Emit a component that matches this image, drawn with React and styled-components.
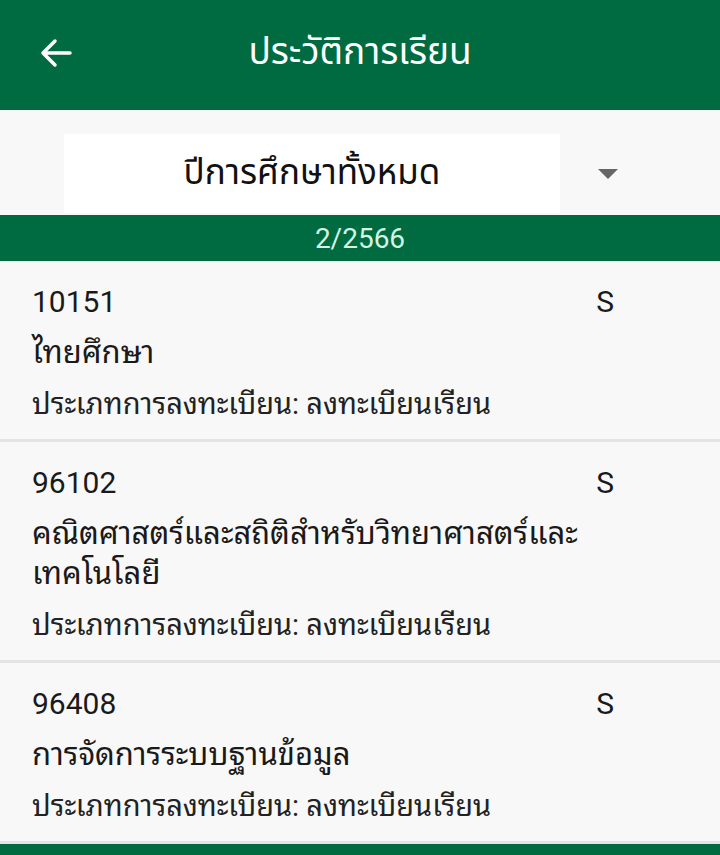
import React from "react";
import styled, { createGlobalStyle } from "styled-components";

const Global = createGlobalStyle`
  html, body { margin: 0; padding: 0; background: #f8f8f8; }
  body { font-family: Roboto, "Noto Sans Thai Looped", "Noto Sans Thai", "Noto Sans", sans-serif; }
`;

const Page = styled.div`
  width: 720px;
  height: 855px;
  overflow: hidden;
  background: #f8f8f8;
  display: flex;
  flex-direction: column;
`;

const Header = styled.header`
  height: 110px;
  background: #006b40;
  display: flex;
  align-items: center;
  position: relative;
  flex-shrink: 0;
`;

const BackButton = styled.button`
  width: 40px;
  height: 40px;
  margin-left: 36px;
  margin-top: -4px;
  padding: 0;
  border: 0;
  background: transparent;
  display: flex;
  align-items: center;
  justify-content: center;
`;

const Title = styled.h1`
  position: absolute;
  left: 0;
  right: 0;
  top: 0;
  bottom: 0;
  display: flex;
  align-items: center;
  justify-content: center;
  margin: 0;
  padding-bottom: 4px;
  color: #ffffff;
  font-family: Roboto, "Noto Sans Thai", sans-serif;
  font-size: 37px;
  font-weight: 400;
  pointer-events: none;
`;

const FilterRow = styled.div`
  padding: 24px 0 2px 64px;
  display: flex;
  align-items: center;
`;

const SelectBox = styled.div`
  width: 496px;
  height: 79px;
  background: #ffffff;
  display: flex;
  align-items: center;
  justify-content: center;
  font-family: Roboto, "Noto Sans Thai", sans-serif;
  font-size: 35px;
  color: #111;
`;

const Caret = styled.div`
  margin-left: 38px;
  width: 0;
  height: 0;
  border-left: 10px solid transparent;
  border-right: 10px solid transparent;
  border-top: 10px solid #666;
`;

const SectionBar = styled.div`
  height: 46px;
  background: #006b40;
  color: #d4f5e2;
  font-size: 28px;
  display: flex;
  align-items: center;
  justify-content: center;
  flex-shrink: 0;
`;

const Item = styled.div`
  padding: 20px 32px 17px 32px;
  border-bottom: 3px solid #e4e4e4;
  display: flex;
  flex-direction: column;
  color: #1a1a1a;
`;

const TopRow = styled.div`
  display: flex;
  justify-content: space-between;
  padding-right: 74px;
  font-size: 30px;
  line-height: 42px;
`;

const Name = styled.div`
  font-size: 31px;
  line-height: 40px;
  margin-top: 10px;
  padding-right: 60px;
`;

const Sub = styled.div`
  font-size: 29px;
  line-height: 36px;
  margin-top: 13px;
  color: #222;
`;

const courses = [
  { code: "10151", name: "ไทยศึกษา", grade: "S" },
  { code: "96102", name: "คณิตศาสตร์และสถิติสำหรับวิทยาศาสตร์และเทคโนโลยี", grade: "S" },
  { code: "96408", name: "การจัดการระบบฐานข้อมูล", grade: "S" },
];

export default function App() {
  return (
    <Page>
      <Global />
      <Header>
        <BackButton aria-label="back">
          <svg width="34" height="30" viewBox="0 0 34 30" fill="none" stroke="#fff" strokeWidth="3.5" strokeLinecap="round" strokeLinejoin="round">
            <path d="M31 15H4M16 3L4 15l12 12" />
          </svg>
        </BackButton>
        <Title>ประวัติการเรียน</Title>
      </Header>
      <FilterRow>
        <SelectBox>ปีการศึกษาทั้งหมด</SelectBox>
        <Caret />
      </FilterRow>
      <SectionBar>2/2566</SectionBar>
      {courses.map((c) => (
        <Item key={c.code}>
          <TopRow>
            <span>{c.code}</span>
            <span>{c.grade}</span>
          </TopRow>
          <Name>{c.name}</Name>
          <Sub>ประเภทการลงทะเบียน: ลงทะเบียนเรียน</Sub>
        </Item>
      ))}
      <SectionBar>1/2566</SectionBar>
    </Page>
  );
}
